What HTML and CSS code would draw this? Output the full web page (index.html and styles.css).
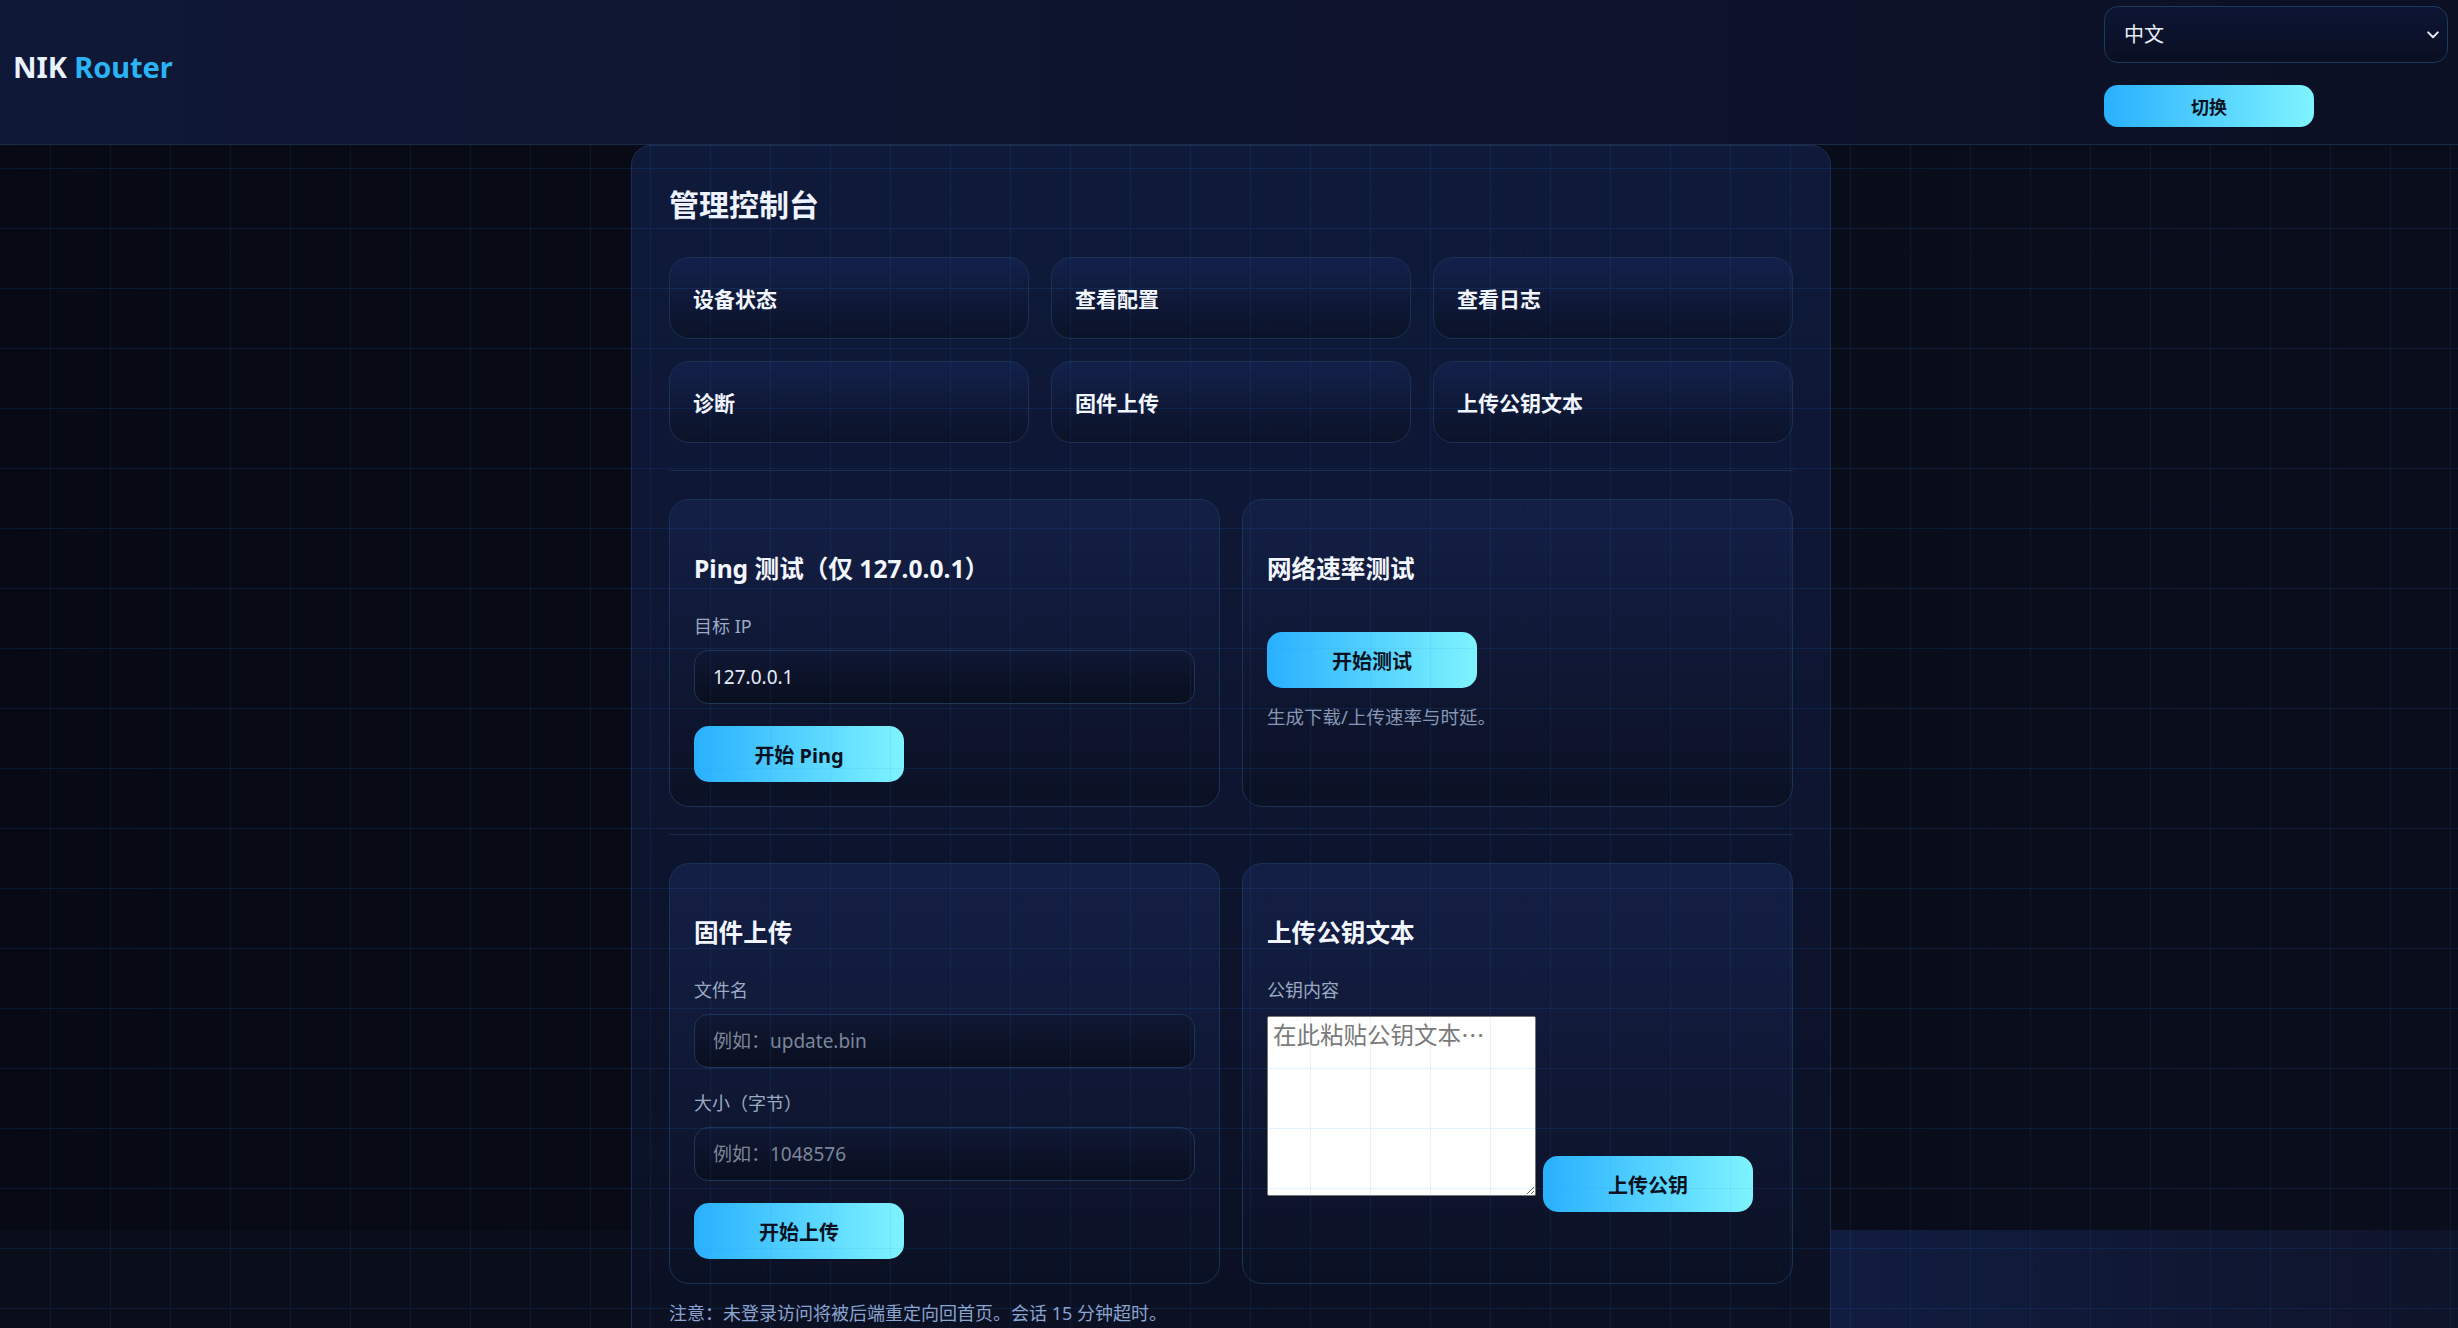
FILE: index.html
```html
<!DOCTYPE html>
<html lang="zh-CN">
<head>
<meta charset="utf-8">
<title>NIK Router</title>
<link rel="stylesheet" href="styles.css">
</head>
<body>
<header class="topbar">
  <div class="brand"><span class="brand-nik">NIK</span> <span class="brand-router">Router</span></div>
  <form class="lang">
    <div class="select-wrap">
      <select class="lang-select">
        <option>中文</option>
        <option>English</option>
      </select>
      <svg class="chev" width="12" height="8" viewBox="0 0 12 8"><path d="M1.2 1.4 6 6.2l4.8-4.8" fill="none" stroke="#e3e9f2" stroke-width="2" stroke-linecap="round" stroke-linejoin="round"/></svg>
    </div>
    <button class="btn btn-sm" type="button">切换</button>
  </form>
</header>

<main class="stage">
  <section class="panel">
    <h1 class="panel-title">管理控制台</h1>
    <nav class="tiles">
      <a class="tile" href="#">设备状态</a>
      <a class="tile" href="#">查看配置</a>
      <a class="tile" href="#">查看日志</a>
      <a class="tile" href="#">诊断</a>
      <a class="tile" href="#">固件上传</a>
      <a class="tile" href="#">上传公钥文本</a>
    </nav>

    <hr class="sep">

    <div class="cards">
      <div class="card">
        <h3 class="card-title">Ping 测试（仅 127.0.0.1）</h3>
        <label class="field-label">目标 IP</label>
        <input class="field" type="text" value="127.0.0.1">
        <button class="btn btn-action" type="button">开始 Ping</button>
      </div>
      <div class="card">
        <h3 class="card-title">网络速率测试</h3>
        <button class="btn btn-speed" type="button">开始测试</button>
        <p class="hint">生成下载/上传速率与时延。</p>
      </div>
    </div>

    <hr class="sep">

    <div class="cards">
      <div class="card">
        <h3 class="card-title">固件上传</h3>
        <label class="field-label">文件名</label>
        <input class="field" type="text" placeholder="例如：update.bin">
        <label class="field-label field-label-next">大小（字节）</label>
        <input class="field" type="text" placeholder="例如：1048576">
        <button class="btn btn-action" type="button">开始上传</button>
      </div>
      <div class="card">
        <h3 class="card-title">上传公钥文本</h3>
        <label class="field-label">公钥内容</label>
        <div class="key-row">
          <textarea class="key-text" placeholder="在此粘贴公钥文本…"></textarea>
          <button class="btn btn-key" type="button">上传公钥</button>
        </div>
      </div>
    </div>

    <p class="note">注意：未登录访问将被后端重定向回首页。会话 15 分钟超时。</p>
  </section>
</main>

<div class="grid-overlay"></div>
</body>
</html>
```

FILE: styles.css
```css
* {
  box-sizing: border-box;
}

html,
body {
  margin: 0;
}

body {
  font-family: "Noto Sans", "Noto Sans CJK SC", sans-serif;
  color: #e8eef8;
  min-height: 100vh;
  background: linear-gradient(90deg, #0a0e1b 0px, #0a0e1b 631px, #111c40 1831px, #0e1429 100%);
}

/* ---------- header ---------- */
.topbar {
  position: relative;
  z-index: 3;
  display: flex;
  justify-content: space-between;
  align-items: center;
  padding: 6px 10px 17px 13px;
  background: linear-gradient(90deg, #0f1836, #0b1024);
  border-bottom: 1px solid #1a2b4a;
}

.brand {
  font-size: 29px;
  font-weight: 700;
  line-height: 1;
  letter-spacing: -0.1px;
}

.brand-nik {
  color: #eaf1ff;
}

.brand-router {
  color: #2ab4f6;
}

.lang {
  display: flex;
  flex-direction: column;
  align-items: flex-start;
  gap: 22px;
  margin: 0;
}

.select-wrap {
  position: relative;
}

.lang-select {
  appearance: none;
  -webkit-appearance: none;
  display: block;
  width: 344px;
  height: 57px;
  padding: 0 40px 0 19px;
  border: 1px solid #1c3a5c;
  border-radius: 14px;
  background: linear-gradient(180deg, #0d1534, #0a0f22);
  color: #e8eef8;
  font-family: "Noto Sans", "Noto Sans CJK SC", sans-serif;
  font-size: 20px;
}

.chev {
  position: absolute;
  right: 9px;
  top: 25px;
  pointer-events: none;
}

/* ---------- buttons ---------- */
.btn {
  display: inline-flex;
  align-items: center;
  justify-content: center;
  width: 210px;
  height: 56px;
  border: none;
  border-radius: 15px;
  background: linear-gradient(90deg, #29b0ff, #7ef3ff);
  color: #08121f;
  font-family: "Noto Sans", "Noto Sans CJK SC", sans-serif;
  font-size: 20px;
  font-weight: 700;
  cursor: pointer;
  padding: 0;
}

.btn-sm {
  height: 42px;
  border-radius: 14px;
  font-size: 18px;
}

.btn-action {
  margin-top: 22px;
}

.btn-speed {
  margin-top: 19px;
}

/* ---------- stage & panel ---------- */
.stage {
  padding-bottom: 40px;
  background: linear-gradient(90deg, #070a14, #0a0e1c) top left / 100% 1085px no-repeat;
}

.panel {
  width: 1200px;
  margin: 0 0 0 calc(50% - 598px);
  padding: 39px 37px 40px;
  border: 1px solid #1a2d50;
  border-radius: 20px;
  background: linear-gradient(180deg, #0f1a3b 0%, #0d1530 50%, #0b1022 100%);
}

.panel-title {
  margin: 0 0 32px;
  font-size: 30px;
  line-height: 40px;
  font-weight: 700;
  color: #eef3ff;
}

.tiles {
  display: grid;
  grid-template-columns: repeat(3, 1fr);
  gap: 22px;
}

.tile {
  display: flex;
  align-items: center;
  height: 82px;
  padding: 0 23px;
  border: 1px solid #1a3152;
  border-radius: 20px;
  background: linear-gradient(180deg, #13204a, #0b1328);
  color: #f2f6ff;
  font-size: 21px;
  font-weight: 700;
  text-decoration: none;
}

.sep {
  height: 1px;
  margin: 27px 0 28px;
  border: none;
  background: #1a2a48;
}

.cards {
  display: grid;
  grid-template-columns: 1fr 1fr;
  gap: 22px;
}

.card {
  display: flex;
  flex-direction: column;
  align-items: flex-start;
  padding: 52px 24px 24px;
  border: 1px solid #1a3254;
  border-radius: 20px;
  background: linear-gradient(180deg, #141f46, #0b1124);
}

.card-title {
  margin: 0 0 27px;
  font-size: 24.6px;
  line-height: 34px;
  font-weight: 700;
  color: #f2f6ff;
}

.field-label {
  display: block;
  margin-bottom: 11px;
  font-size: 18px;
  line-height: 26px;
  color: #9aaac2;
}

.field-label-next {
  margin-top: 22px;
}

.field {
  width: 100%;
  height: 54px;
  padding: 0 18px;
  border: 1px solid #1c3558;
  border-radius: 14px;
  background: linear-gradient(180deg, #0f1733, #0a0f1f);
  color: #e6edf7;
  font-family: "Noto Sans", "Noto Sans CJK SC", sans-serif;
  font-size: 19px;
  outline: none;
}

.field::placeholder {
  color: #7b8699;
}

.hint {
  margin: 16px 0 0;
  font-size: 18.5px;
  line-height: 26px;
  color: #8796b4;
}

.key-row {
  display: flex;
  align-items: flex-end;
  gap: 7px;
  margin-top: 2px;
}

.key-text {
  width: 269px;
  height: 180px;
  margin: 0;
  padding: 2px 5px;
  border: 1px solid #767676;
  border-radius: 2px;
  background: #ffffff;
  font-family: "Noto Sans CJK SC", sans-serif;
  font-size: 23.5px;
  line-height: 1.3;
}

.key-text::placeholder {
  color: #7a7a7a;
}

.btn-key {
  margin-bottom: -16px;
}

.note {
  margin: 16px 0 0;
  font-size: 18px;
  line-height: 26px;
  color: #8ba3cf;
}

/* ---------- grid overlay ---------- */
.grid-overlay {
  position: fixed;
  inset: 0;
  z-index: 2;
  pointer-events: none;
  background-image:
    linear-gradient(90deg, rgba(40, 140, 255, 0.1) 1px, transparent 1px),
    linear-gradient(180deg, rgba(40, 140, 255, 0.11) 1px, transparent 1px);
  background-size: 60px 60px;
  background-position: 50px 48px;
}
```
